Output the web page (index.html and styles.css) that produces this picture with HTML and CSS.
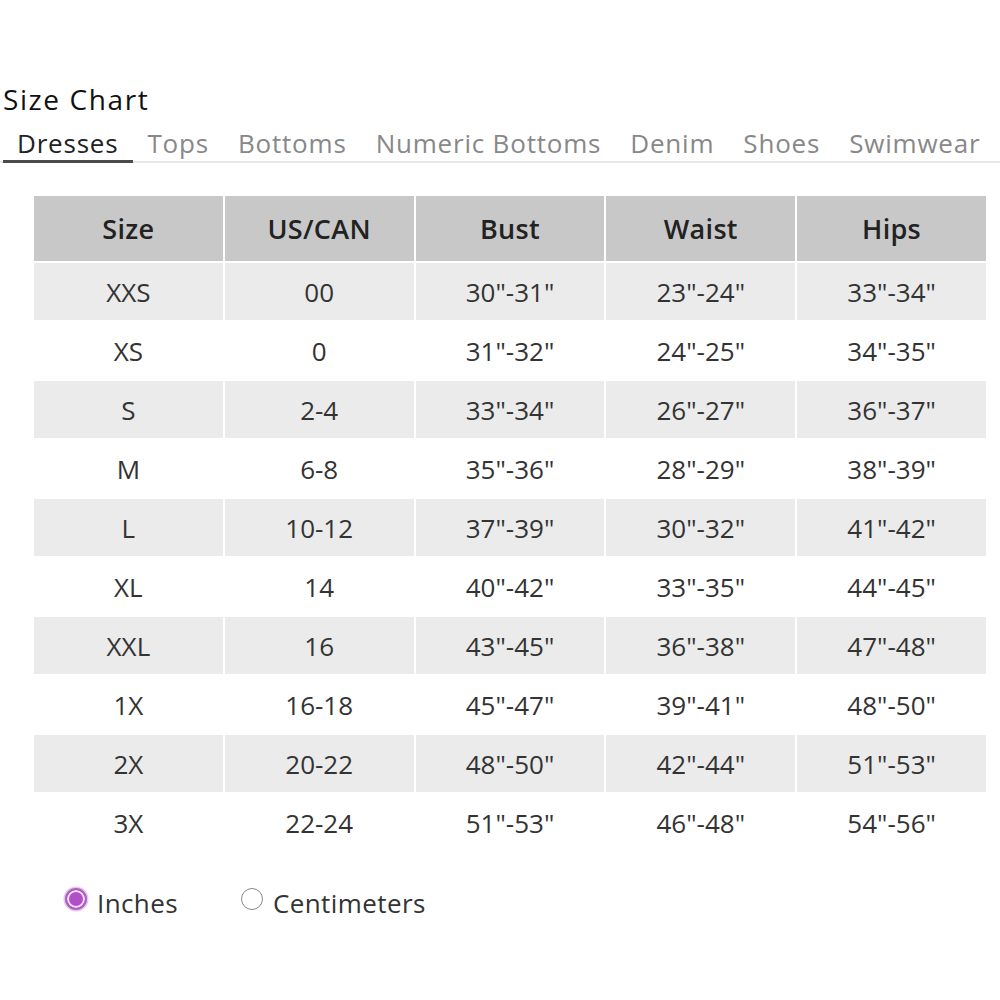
FILE: index.html
```html
<!DOCTYPE html>
<html>
<head>
<meta charset="utf-8">
<link rel="stylesheet" href="styles.css">
</head>
<body>
<div class="page">
  <h1 class="title">Size Chart</h1>
  <div class="tabs">
    <span class="tab active">Dresses</span>
    <span class="tab">Tops</span>
    <span class="tab">Bottoms</span>
    <span class="tab">Numeric Bottoms</span>
    <span class="tab">Denim</span>
    <span class="tab">Shoes</span>
    <span class="tab">Swimwear</span>
  </div>
  <table class="chart">
    <thead>
      <tr><th>Size</th><th>US/CAN</th><th>Bust</th><th>Waist</th><th>Hips</th></tr>
    </thead>
    <tbody>
      <tr><td>XXS</td><td>00</td><td>30"-31"</td><td>23"-24"</td><td>33"-34"</td></tr>
      <tr><td>XS</td><td>0</td><td>31"-32"</td><td>24"-25"</td><td>34"-35"</td></tr>
      <tr><td>S</td><td>2-4</td><td>33"-34"</td><td>26"-27"</td><td>36"-37"</td></tr>
      <tr><td>M</td><td>6-8</td><td>35"-36"</td><td>28"-29"</td><td>38"-39"</td></tr>
      <tr><td>L</td><td>10-12</td><td>37"-39"</td><td>30"-32"</td><td>41"-42"</td></tr>
      <tr><td>XL</td><td>14</td><td>40"-42"</td><td>33"-35"</td><td>44"-45"</td></tr>
      <tr><td>XXL</td><td>16</td><td>43"-45"</td><td>36"-38"</td><td>47"-48"</td></tr>
      <tr><td>1X</td><td>16-18</td><td>45"-47"</td><td>39"-41"</td><td>48"-50"</td></tr>
      <tr><td>2X</td><td>20-22</td><td>48"-50"</td><td>42"-44"</td><td>51"-53"</td></tr>
      <tr><td>3X</td><td>22-24</td><td>51"-53"</td><td>46"-48"</td><td>54"-56"</td></tr>
    </tbody>
  </table>
  <div class="units">
    <label class="unit"><span class="radio checked"></span>Inches</label>
    <label class="unit"><span class="radio"></span>Centimeters</label>
  </div>
</div>
</body>
</html>
```

FILE: styles.css
```css
html, body {
  margin: 0;
  padding: 0;
  background: #fff;
}
body {
  font-family: "Open Sans", "Liberation Sans", sans-serif;
  color: #222;
}
.page {
  padding-top: 81px;
}
.title {
  margin: 0 0 0 3px;
  font-size: 28px;
  font-weight: 400;
  line-height: 36px;
  letter-spacing: 1.6px;
  color: #111;
}
.tabs {
  display: flex;
  border-bottom: 2px solid #e8e8e8;
  padding-left: 3px;
}
.tab {
  padding: 9px 15px 0 14px;
  font-size: 26px;
  line-height: 34px;
  letter-spacing: 0.8px;
  color: #888;
  margin-bottom: -2px;
  border-bottom: 3px solid transparent;
}
.tab.active {
  color: #222;
  border-bottom-color: #4a4a4a;
}
.chart {
  margin: 31px 0 0 32px;
  border-collapse: separate;
  border-spacing: 2px;
  width: 956px;
  table-layout: fixed;
}
.chart th {
  background: #c8c8c8;
  height: 65px;
  padding: 0;
  font-size: 27px;
  font-weight: 600;
  letter-spacing: 0.3px;
  color: #222;
  text-align: center;
}
.chart td {
  height: 57px;
  padding: 0;
  font-size: 26px;
  color: #333;
  text-align: center;
}
.chart tbody tr:nth-child(odd) td {
  background: #ebebeb;
}
.units {
  display: flex;
  align-items: center;
  gap: 63px;
  margin: 32px 0 0 65px;
  height: 36px;
}
.unit {
  display: flex;
  align-items: center;
  gap: 10px;
  font-size: 26px;
  line-height: 36px;
  letter-spacing: 0.4px;
  color: #333;
}
.radio {
  width: 22px;
  height: 22px;
  border-radius: 50%;
  border: 1.5px solid #8a8a8a;
  box-sizing: border-box;
  background: #fff;
  margin-bottom: 8px;
}
.radio.checked {
  border: 2px solid #b35cca;
  background: #b04fc8;
  box-shadow: inset 0 0 0 2px #f6e8fa, 0 0 0 1.5px #e6c6ee;
}
```
